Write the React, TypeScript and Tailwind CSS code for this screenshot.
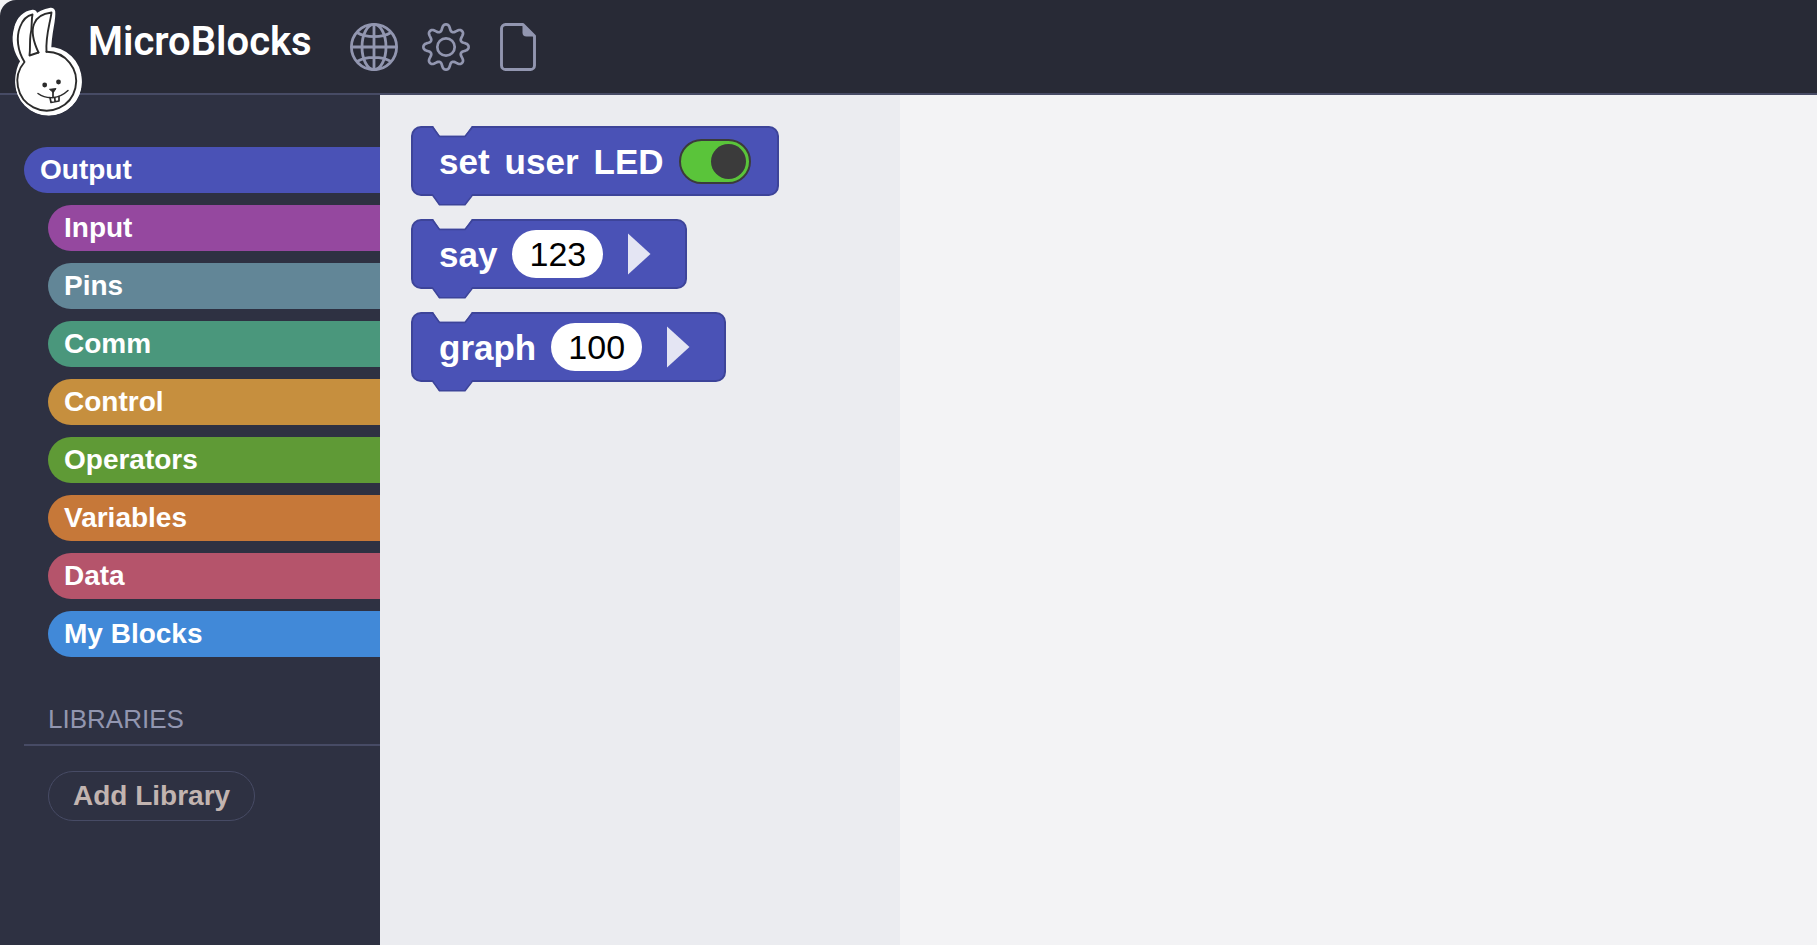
import React, { useState } from 'react';

type Category = { name: string; className: string };

const categories: Category[] = [
  { name: 'Output', className: 'bg-[#4a52b6]' },
  { name: 'Input', className: 'bg-[#95489f]' },
  { name: 'Pins', className: 'bg-[#628697]' },
  { name: 'Comm', className: 'bg-[#4a977c]' },
  { name: 'Control', className: 'bg-[#c68f3e]' },
  { name: 'Operators', className: 'bg-[#5f9a36]' },
  { name: 'Variables', className: 'bg-[#c67839]' },
  { name: 'Data', className: 'bg-[#b5546b]' },
  { name: 'My Blocks', className: 'bg-[#4189d8]' },
];

function RabbitLogo() {
  const outline =
    'M25 61 C18 52 15 40 18.500 28 C20.500 20 26 15 33 14 C33 20 31 26 32 31 C32 22 38 14 51 12 C52 20 47 32 47 51 C64 51 77.500 63 77.500 81 C77.500 98 65 111 49 111 C32 111 19.500 98 19.500 81 C19.500 73 21 67 25 61 Z';
  return (
    <svg width="90" height="120" viewBox="0 0 90 120" className="absolute top-0 left-0" aria-hidden="true">
      <path d={outline} fill="#fff" stroke="#fff" strokeWidth="8.500" strokeLinejoin="round" />
      <circle cx="48.500" cy="82.300" r="33.200" fill="#fff" />
      <g fill="none" stroke="#2b2b2b" strokeWidth="1.900" strokeLinecap="round" strokeLinejoin="round">
        <path d="M46.500 51.800 A29.400 29.400 0 1 1 24.500 62 C17.500 51 16 37 20 27 C22.500 20.500 27 15.500 32.500 14.500 C31 21 32.500 27 30.500 35 C29.500 42 30.500 48 29.500 55.500 L38.500 52.500" />
        <path d="M38.500 52.500 C34.500 44 30.500 33 34 24 C36.500 17 43 13.500 51.500 12.500 C50 24 45.500 35 46.500 51.800" />
        <path d="M38 93.500 C47 100 59 99 68 90.500" strokeWidth="1.500" />
        <path d="M53 91 V97.500 M50 97.500 L51 102.500 L59 101 L59 96.500 M54.800 97.500 L55 101.500" strokeWidth="1.700" />
      </g>
      <circle cx="44.700" cy="85" r="2.400" fill="#2b2b2b" />
      <circle cx="58.500" cy="82" r="2.400" fill="#2b2b2b" />
      <path d="M49.500 89.300 L56 88.600 L53.300 92.500 Z" fill="#2b2b2b" stroke="#2b2b2b" />
    </svg>
  );
}

function GlobeIcon() {
  return (
    <svg width="48" height="48" viewBox="0 0 48 48" fill="none" stroke="currentColor" strokeWidth="2.800" aria-hidden="true">
      <circle cx="24" cy="24" r="22.600" />
      <ellipse cx="24" cy="24" rx="12" ry="22.600" />
      <path d="M24 1 V47 M1 24 H47 M7 9.500 C16 15 32 15 41 9.500 M7 38.500 C16 33 32 33 41 38.500" />
    </svg>
  );
}

/* Eight rounded teeth: a cosine wave flattened at its peaks and valleys. */
function gearPath() {
  const points: string[] = [];
  for (let i = 0; i < 240; i++) {
    const a = (i / 240) * Math.PI * 2;
    const wave = Math.tanh(1.1 * Math.cos(8 * a)) / Math.tanh(1.1);
    const r = 19.4 + 3.2 * wave;
    points.push(`${(24 + r * Math.cos(a)).toFixed(2)} ${(24 + r * Math.sin(a)).toFixed(2)}`);
  }
  return `M${points.join('L')}Z`;
}

function GearIcon() {
  return (
    <svg width="48" height="48" viewBox="0 0 48 48" fill="none" stroke="currentColor" strokeWidth="2.700" strokeLinejoin="round" aria-hidden="true">
      <path d={gearPath()} />
      <circle cx="24" cy="24" r="8.700" />
    </svg>
  );
}

function FileIcon() {
  return (
    <svg width="36" height="48" viewBox="0 0 36 48" aria-hidden="true">
      <path d="M5.500 1.500 H23 L34.500 13 V42.500 A4 4 0 0 1 30.500 46.500 H5.500 A4 4 0 0 1 1.500 42.500 V5.500 A4 4 0 0 1 5.500 1.500 Z" fill="none" stroke="currentColor" strokeWidth="2.900" strokeLinejoin="round" />
      <path d="M22.500 1 L35.500 13.500 H26.500 A4 4 0 0 1 22.500 9.500 Z" fill="currentColor" />
    </svg>
  );
}

function Block({ children }: { children: React.ReactNode }) {
  return (
    <div className="relative flex h-[70px] items-center gap-[15px] rounded-[10px] border-2 border-[#3d4499] bg-[#4a52b6] px-[26px] text-[35px] leading-none font-bold text-white">
      <svg width="44" height="12" viewBox="0 0 44 12" className="absolute -top-0.5 left-[18px]" aria-hidden="true">
        <path d="M1.500 -1 L8.500 9.800 H34 L41.500 -1 Z" fill="#ebecf0" />
        <path d="M0 1 H1.500 L8.500 10.500 H34 L41.500 1 H44" fill="none" stroke="#3d4499" strokeWidth="1.600" />
      </svg>
      <svg width="44" height="13" viewBox="0 0 44 13" className="absolute top-[66px] left-[18px]" aria-hidden="true">
        <path d="M1 0 L8 11 H34 L41.500 0 Z" fill="#4a52b6" />
        <path d="M0 1 H1.500 L8.500 10.800 H34 L41.500 1 H44" fill="none" stroke="#3d4499" strokeWidth="1.600" />
      </svg>
      {children}
    </div>
  );
}

function NumberBlock({ label, initial }: { label: string; initial: string }) {
  const [value, setValue] = useState(initial);
  return (
    <Block>
      <span>{label}</span>
      <input
        aria-label={label}
        value={value}
        onChange={(e) => setValue(e.target.value)}
        className="h-12 w-[91px] rounded-full bg-white text-center text-[34px] leading-none font-normal text-black outline-none"
      />
      <button aria-label={`Expand ${label}`} className="mr-2 ml-2.5">
        <svg width="23" height="42" viewBox="0 0 23 42" aria-hidden="true">
          <path d="M0 0.500 L22.500 21 L0 41.500 Z" fill="#e4e5f3" />
        </svg>
      </button>
    </Block>
  );
}

export default function App() {
  const [selected, setSelected] = useState('Output');
  const [led, setLed] = useState(true);

  return (
    <div className="flex min-h-screen flex-col bg-[#f3f3f5] font-['Liberation_Sans',Arial,sans-serif]">
      <header className="relative z-10 flex h-[95px] items-start rounded-tl-[16px] border-b-2 border-[#474b65] bg-[#282a36] pl-[88px] text-[#9296b0]">
        <RabbitLogo />
        <h1 className="mt-[17px] text-[40px] leading-[50px] font-semibold text-white font-[Roboto,sans-serif]">MicroBlocks</h1>
        <nav className="ml-[38px] flex gap-6 pt-[23px]">
          <button aria-label="Language"><GlobeIcon /></button>
          <button aria-label="Settings"><GearIcon /></button>
          <button aria-label="File" className="px-1.5"><FileIcon /></button>
        </nav>
      </header>
      <div className="flex flex-1">
        <aside className="w-[380px] shrink-0 bg-[#2e3142] pt-[52px] pl-6">
          <div className="flex flex-col gap-3">
            {categories.map((c) => (
              <button
                key={c.name}
                onClick={() => setSelected(c.name)}
                className={`h-[46px] rounded-l-full pl-4 text-left text-[28px] leading-none font-bold text-white ${c.className} ${selected === c.name ? '' : 'ml-6'}`}
              >
                {c.name}
              </button>
            ))}
          </div>
          <h2 className="mt-[46px] border-b-2 border-[#474b65] pb-[9px] pl-6 text-[26px] leading-[32px] text-[#9296b0]">LIBRARIES</h2>
          <button className="mt-[25px] ml-6 h-[50px] rounded-full border border-[#474b65] px-6 text-[28px] leading-none font-bold text-[#c2b4b0]">
            Add Library
          </button>
        </aside>
        <section aria-label="Blocks" className="flex w-[520px] shrink-0 flex-col items-start gap-[23px] bg-[#ebecf0] pt-[31px] pl-[31px]">
          <Block>
            <span>set</span>
            <span>user</span>
            <span>LED</span>
            <button
              role="switch"
              aria-checked={led}
              aria-label="user LED"
              onClick={() => setLed(!led)}
              className={`flex h-[45px] w-[72px] items-center rounded-full border-2 border-[#3b3b3b] px-[3px] ${led ? 'justify-end bg-[#5ac43a]' : 'justify-start bg-[#c43a3a]'}`}
            >
              <span className="size-[35px] rounded-full bg-[#3b3b3b]" />
            </button>
          </Block>
          <NumberBlock label="say" initial="123" />
          <NumberBlock label="graph" initial="100" />
        </section>
        <main aria-label="Scripts" className="flex-1" />
      </div>
    </div>
  );
}
